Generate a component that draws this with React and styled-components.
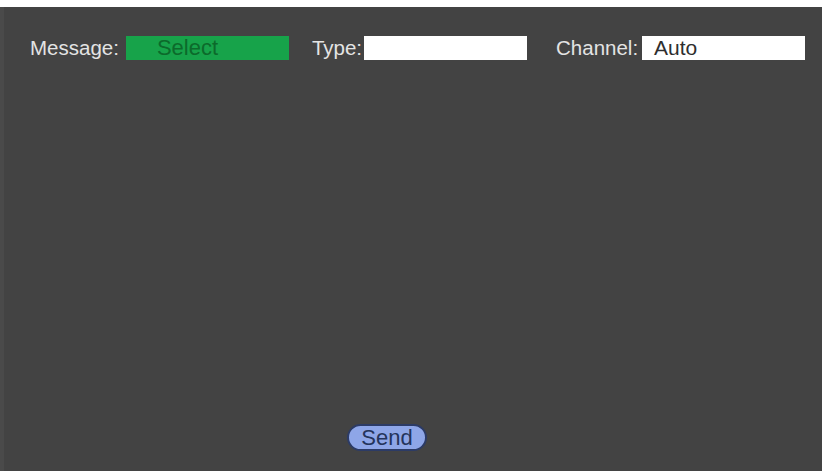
import React from 'react';
import styled, { createGlobalStyle } from 'styled-components';

const GlobalStyle = createGlobalStyle`
  html, body {
    margin: 0;
    padding: 0;
    background: #ffffff;
  }
  body {
    font-family: "Liberation Sans", Arial, sans-serif;
  }
`;

const Page = styled.div`
  width: 827px;
  height: 471px;
  padding: 7px 5px 0 0;
  box-sizing: border-box;
  display: flex;
`;

const Panel = styled.div`
  flex: 1;
  display: flex;
  flex-direction: column;
  background: #434343;
  border-left: 4px solid #4a4a4a;
`;

const Toolbar = styled.div`
  display: flex;
  align-items: center;
  padding: 29px 0 0 26px;
`;

const Field = styled.div`
  display: flex;
  align-items: center;
  gap: ${(p) => p.$gap || 7}px;
  margin-right: ${(p) => p.$after || 0}px;
`;

const Label = styled.span`
  color: #e4e4e4;
  font-size: 20.5px;
  line-height: 24px;
`;

const Box = styled.div`
  width: 163px;
  height: 24px;
  box-sizing: border-box;
  display: flex;
  align-items: center;
  padding-left: ${(p) => p.$indent || 12}px;
  background: ${(p) => p.$bg || '#ffffff'};
  color: ${(p) => p.$color || '#2e2e2e'};
  font-size: ${(p) => p.$size || 21}px;
`;

const Spacer = styled.div`
  flex: 1;
`;

const Footer = styled.div`
  display: flex;
  padding: 0 0 20px 343px;
`;

const SendButton = styled.button`
  width: 80px;
  height: 27px;
  border-radius: 14px;
  border: 2px solid #2c3b66;
  background: #8ea6e8;
  color: #24345c;
  font-family: "Liberation Sans", Arial, sans-serif;
  font-size: 22px;
  line-height: 22px;
  padding: 0;
  cursor: pointer;
`;

export default function App() {
  return (
    <>
      <GlobalStyle />
      <Page>
        <Panel>
          <Toolbar>
            <Field $gap={7} $after={23}>
              <Label>Message:</Label>
              <Box $bg="#17a34a" $color="#0c6a2b" $size={22} $indent={31}>
                Select
              </Box>
            </Field>
            <Field $gap={2} $after={29}>
              <Label>Type:</Label>
              <Box />
            </Field>
            <Field $gap={4}>
              <Label>Channel:</Label>
              <Box>Auto</Box>
            </Field>
          </Toolbar>
          <Spacer />
          <Footer>
            <SendButton>Send</SendButton>
          </Footer>
        </Panel>
      </Page>
    </>
  );
}
